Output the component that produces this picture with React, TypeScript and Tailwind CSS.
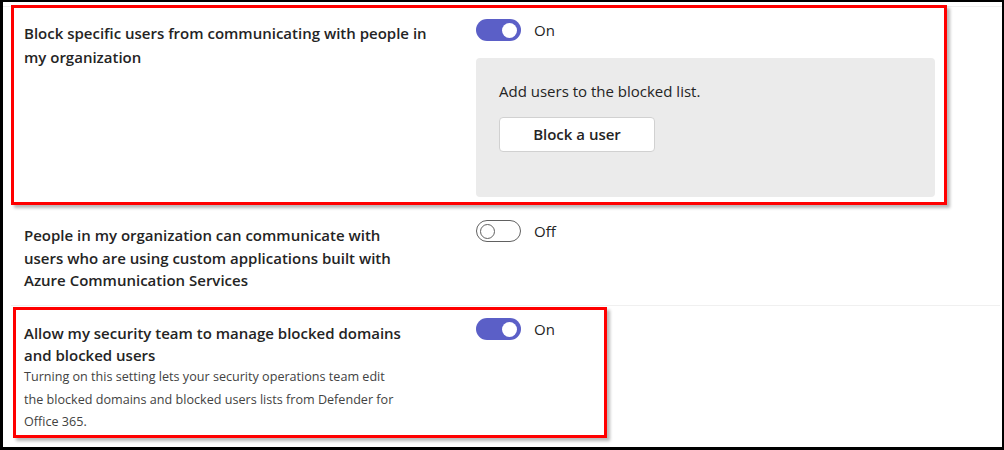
import React from "react";

const font = { fontFamily: '"Open Sans", "Noto Sans", Arial, sans-serif' };

function Toggle({ on, label }: { on: boolean; label: string }) {
  return (
    <div className="flex items-center gap-[13px] self-start">
      {on ? (
        <div className="w-[45px] h-[22px] rounded-full bg-[#5b5fc7] flex items-center justify-end pr-[4px]">
          <div className="w-[15px] h-[15px] rounded-full bg-white" />
        </div>
      ) : (
        <div className="w-[45px] h-[22px] rounded-full border border-[#616161] bg-white flex items-center pl-[3px]">
          <div className="w-[15px] h-[15px] rounded-full border border-[#616161]" />
        </div>
      )}
      <span className="text-[15px] text-[#242424] leading-[20px]">{label}</span>
    </div>
  );
}

export default function App() {
  return (
    <div
      style={font}
      className="w-[1004px] h-[450px] bg-white border-black border-l-[3px] border-t-[2px] border-r-[2px] border-b-[3px] overflow-hidden"
    >
      <div className="mt-[4px] border-t border-[#efefef]">
        {/* row 1 */}
        <div className="-mt-[2px] ml-[8px] w-[936px] h-[200px] border-[3px] border-[#ff0000] shadow-[3px_3px_3px_rgba(0,0,0,0.28)] flex items-start pl-[10px] pt-[11px]">
          <div className="w-[452px] pt-[2px]">
            <p className="whitespace-nowrap text-[15px] leading-[24px] font-semibold text-[#242424]">
              Block specific users from communicating with people in
              <br />
              my organization
            </p>
          </div>
          <div className="flex flex-col">
            <Toggle on label="On" />
            <div className="mt-[17px] w-[459px] h-[139px] rounded-[4px] bg-[#ebebeb] pl-[23px] pt-[23px]">
              <p className="text-[15px] leading-[20px] text-[#242424]">Add users to the blocked list.</p>
              <button className="mt-[16px] w-[156px] h-[35px] rounded-[4px] bg-white border border-[#d1d1d1] text-[15px] font-semibold text-[#242424]">
                Block a user
              </button>
            </div>
          </div>
        </div>

        {/* row 2 */}
        <div className="mt-[12px] ml-[8px] mr-[2px] h-[89px] border-b border-[#f0f0f0] flex items-start pl-[13px] pt-[3px]">
          <div className="w-[452px] pt-[4px]">
            <p className="whitespace-nowrap text-[15px] leading-[22.5px] font-semibold text-[#242424]">
              People in my organization can communicate with
              <br />
              users who are using custom applications built with
              <br />
              Azure Communication Services
            </p>
          </div>
          <Toggle on={false} label="Off" />
        </div>

        {/* row 3 */}
        <div className="mt-[1px] ml-[10px] w-[594px] h-[131px] border-[3px] border-[#ff0000] shadow-[3px_3px_3px_rgba(0,0,0,0.28)] flex items-start pl-[8px] pt-[8px]">
          <div className="w-[452px] pt-[4px]">
            <p className="whitespace-nowrap text-[15px] leading-[22px] font-semibold text-[#242424]">
              Allow my security team to manage blocked domains
              <br />
              and blocked users
            </p>
            <p className="whitespace-nowrap text-[12.6px] leading-[22.6px] text-[#424242]">
              Turning on this setting lets your security operations team edit
              <br />
              the blocked domains and blocked users lists from Defender for
              <br />
              Office 365.
            </p>
          </div>
          <Toggle on label="On" />
        </div>
      </div>
    </div>
  );
}
